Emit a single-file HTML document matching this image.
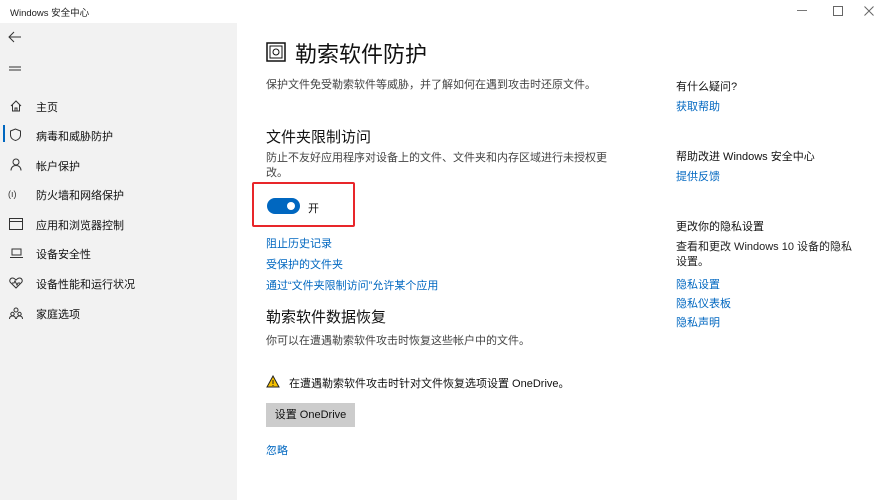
<!DOCTYPE html>
<html><head><meta charset="utf-8"><style>
*{margin:0;padding:0;box-sizing:border-box}
body{width:885px;height:500px;position:relative;background:#fff;font-family:"Liberation Sans","Noto Sans CJK SC",sans-serif;color:#000;overflow:hidden}
.a{position:absolute;white-space:nowrap}
.side{position:absolute;left:0;top:23px;width:237px;height:477px;background:#f2f2f2}
.n{font-size:11px;color:#111}
.l{font-size:11px;color:#0067c0}
.g{font-size:11px;color:#444}
svg{position:absolute}
</style></head><body>
<div class="a" style="left:10px;top:5px;font-size:9.5px;color:#222">Windows 安全中心</div>
<svg style="left:797px;top:5px" width="10" height="10"><path d="M0 5.5h10" stroke="#777"/></svg>
<svg style="left:833px;top:6px" width="10" height="10"><rect x=".5" y=".5" width="9" height="9" stroke="#666" fill="none"/></svg>
<svg style="left:864px;top:6px" width="10" height="10"><path d="M.5 .5l9 9M9.5 .5l-9 9" stroke="#666"/></svg>
<div class="side"></div>
<svg style="left:8px;top:31px" width="14" height="12"><path d="M13 6H1M6 1L1 6l5 5" stroke="#333" fill="none" stroke-width="1"/></svg>
<svg style="left:9px;top:66px" width="12" height="6"><path d="M0 1h12M0 4h12" stroke="#333" stroke-width="1"/></svg>
<svg style="left:10px;top:100px" width="12" height="12"><path d="M1 6L6 1l5 5M2.5 5v6h7V5M5 11V8h2v3" stroke="#333" fill="none"/></svg>
<div class="a" style="left:3px;top:125px;width:2px;height:17px;background:#0067c0"></div>
<svg style="left:9px;top:128px" width="13" height="13"><path d="M6.5 1L1.5 3v4c0 3 2.5 5 5 5.5 2.5-.5 5-2.5 5-5.5V3z" stroke="#333" fill="none"/></svg>
<svg style="left:10px;top:158px" width="12" height="13"><circle cx="6" cy="4" r="3" stroke="#333" fill="none"/><path d="M1 12.5c0-3 2-5 5-5s5 2 5 5" stroke="#333" fill="none"/></svg>
<div class="a" style="left:8px;top:189px;font-size:9px;color:#333">(ı)</div>
<svg style="left:9px;top:218px" width="14" height="12"><rect x=".5" y=".5" width="13" height="11" stroke="#333" fill="none"/><path d="M0 3.5h14" stroke="#333"/></svg>
<svg style="left:10px;top:248px" width="13" height="11"><rect x="2" y="1" width="9" height="6" stroke="#333" fill="none"/><path d="M0 9.5h13" stroke="#333"/></svg>
<svg style="left:9px;top:277px" width="14" height="12"><path d="M7 11L1.5 5.5C0 4 1 1 3.5 1 5 1 6 2 7 3c1-1 2-2 3.5-2C13 1 14 4 12.5 5.5zM3 6h2l1-2 2 4 1-2h2" stroke="#333" fill="none"/></svg>
<svg style="left:9px;top:307px" width="14" height="12"><circle cx="7" cy="3" r="2" stroke="#333" fill="none"/><circle cx="3.5" cy="7" r="1.7" stroke="#333" fill="none"/><circle cx="10.5" cy="7" r="1.7" stroke="#333" fill="none"/><path d="M.5 12c0-2 1.3-3 3-3s3 1 3 3M7.5 12c0-2 1.3-3 3-3s3 1 3 3" stroke="#333" fill="none"/></svg>
<div class="a n" style="left:36px;top:99px">主页</div>
<div class="a n" style="left:36px;top:128px">病毒和威胁防护</div>
<div class="a n" style="left:36px;top:158px">帐户保护</div>
<div class="a n" style="left:36px;top:187px">防火墙和网络保护</div>
<div class="a n" style="left:36px;top:217px">应用和浏览器控制</div>
<div class="a n" style="left:36px;top:246px">设备安全性</div>
<div class="a n" style="left:36px;top:276px">设备性能和运行状况</div>
<div class="a n" style="left:36px;top:306px">家庭选项</div>

<svg style="left:266px;top:42px" width="20" height="20"><rect x="1" y="1" width="18" height="18" stroke="#111" stroke-width="1.5" fill="none"/><rect x="4" y="4" width="12" height="12" stroke="#111" fill="none"/><circle cx="10" cy="10" r="3" stroke="#111" fill="none"/></svg>
<div class="a" style="left:295px;top:37px;font-size:22px;color:#111">勒索软件防护</div>
<div class="a g" style="left:266px;top:76px">保护文件免受勒索软件等威胁，并了解如何在遇到攻击时还原文件。</div>
<div class="a" style="left:266px;top:126px;font-size:15px;color:#111">文件夹限制访问</div>
<div class="a g" style="left:266px;top:151px;line-height:15px">防止不友好应用程序对设备上的文件、文件夹和内存区域进行未授权更<br>改。</div>
<div class="a" style="left:252px;top:182px;width:103px;height:45px;border:2px solid #e8262a;border-radius:2px"></div>
<div class="a" style="left:267px;top:198px;width:33px;height:16px;border-radius:8px;background:#0067c0"></div>
<div class="a" style="left:287px;top:202px;width:8px;height:8px;border-radius:50%;background:#fff"></div>
<div class="a n" style="left:308px;top:200px">开</div>
<div class="a l" style="left:266px;top:235px">阻止历史记录</div>
<div class="a l" style="left:266px;top:256px">受保护的文件夹</div>
<div class="a l" style="left:266px;top:277px">通过“文件夹限制访问”允许某个应用</div>
<div class="a" style="left:266px;top:306px;font-size:15px;color:#111">勒索软件数据恢复</div>
<div class="a g" style="left:266px;top:332px">你可以在遭遇勒索软件攻击时恢复这些帐户中的文件。</div>
<svg style="left:266px;top:375px" width="14" height="13"><path d="M7 1L13 12H1z" fill="#f5c000" stroke="#222" stroke-width="1"/><path d="M7 5v4M7 10v1" stroke="#222"/></svg>
<div class="a n" style="left:289px;top:375px">在遭遇勒索软件攻击时针对文件恢复选项设置 OneDrive。</div>
<div class="a" style="left:266px;top:403px;width:89px;height:24px;background:#ccc;font-size:11px;color:#111;text-align:center;line-height:24px">设置 OneDrive</div>
<div class="a l" style="left:266px;top:442px">忽略</div>

<div class="a n" style="left:676px;top:78px">有什么疑问?</div>
<div class="a l" style="left:676px;top:98px">获取帮助</div>
<div class="a n" style="left:676px;top:148px">帮助改进 Windows 安全中心</div>
<div class="a l" style="left:676px;top:168px">提供反馈</div>
<div class="a n" style="left:676px;top:218px">更改你的隐私设置</div>
<div class="a n" style="left:676px;top:240px;line-height:15px;color:#222">查看和更改 Windows 10 设备的隐私<br>设置。</div>
<div class="a l" style="left:676px;top:276px">隐私设置</div>
<div class="a l" style="left:676px;top:295px">隐私仪表板</div>
<div class="a l" style="left:676px;top:314px">隐私声明</div>
</body></html>
